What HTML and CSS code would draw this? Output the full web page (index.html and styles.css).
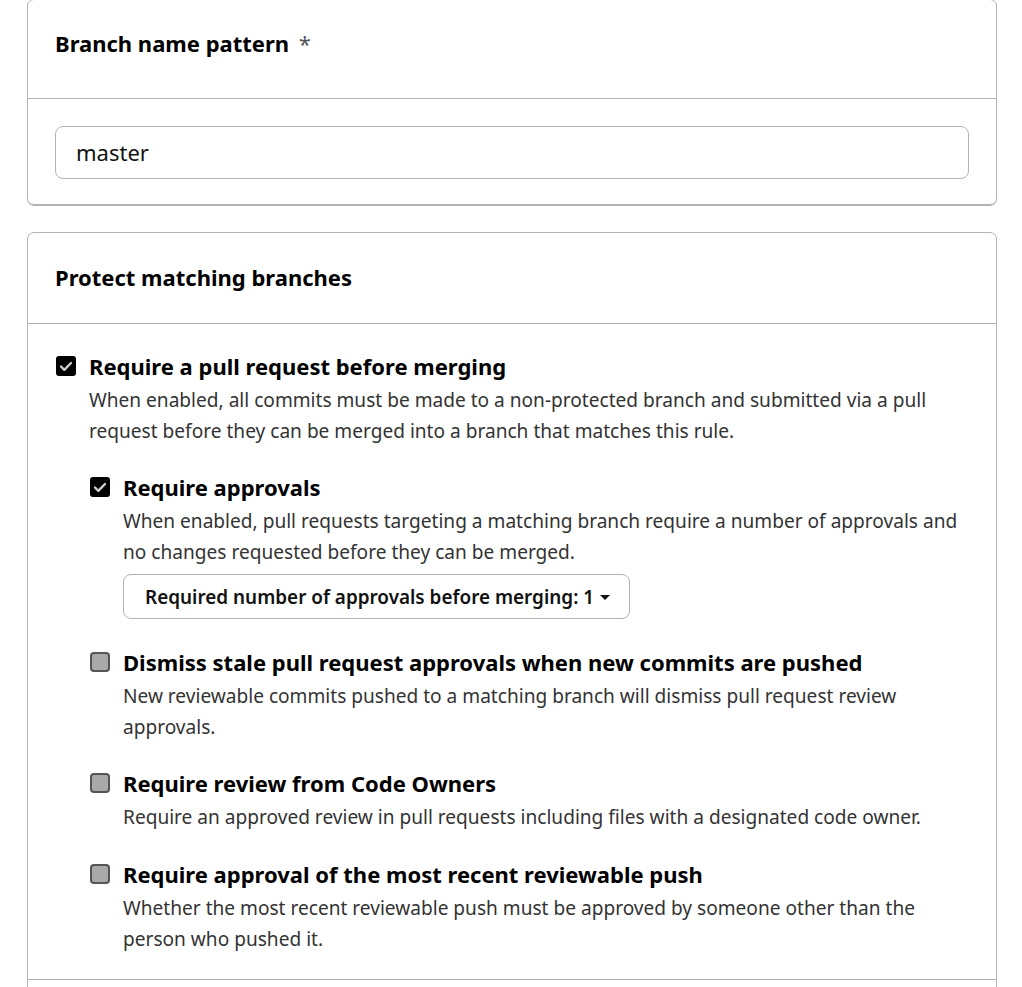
FILE: index.html
```html
<!DOCTYPE html>
<html lang="en">
<head>
<meta charset="utf-8">
<title>Branch protection rule</title>
<link rel="stylesheet" href="styles.css">
</head>
<body>
<div class="page">
  <section class="box box-first">
    <div class="box-header">
      <h2 class="box-title">Branch name pattern <span class="req">*</span></h2>
    </div>
    <div class="box-body">
      <div class="text-input">master</div>
    </div>
  </section>

  <section class="box box-second">
    <div class="box-header">
      <h2 class="box-title">Protect matching branches</h2>
    </div>
    <div class="box-body rules">
      <div class="rule">
        <span class="cb cb-checked"><svg viewBox="0 0 20 20" width="20" height="20"><path d="M5 10.5l3.3 3.3L15 7" fill="none" stroke="#cfcfcf" stroke-width="2.4" stroke-linecap="round" stroke-linejoin="round"/></svg></span>
        <div class="rule-text">
          <div class="rule-title">Require a pull request before merging</div>
          <div class="rule-desc">When enabled, all commits must be made to a non-protected branch and submitted via a pull request before they can be merged into a branch that matches this rule.</div>

          <div class="rule sub">
            <span class="cb cb-checked"><svg viewBox="0 0 20 20" width="20" height="20"><path d="M5 10.5l3.3 3.3L15 7" fill="none" stroke="#cfcfcf" stroke-width="2.4" stroke-linecap="round" stroke-linejoin="round"/></svg></span>
            <div class="rule-text">
              <div class="rule-title">Require approvals</div>
              <div class="rule-desc">When enabled, pull requests targeting a matching branch require a number of approvals and no changes requested before they can be merged.</div>
              <div class="select-btn">Required number of approvals before merging: 1 <span class="caret"></span></div>
            </div>
          </div>

          <div class="rule sub">
            <span class="cb"></span>
            <div class="rule-text">
              <div class="rule-title">Dismiss stale pull request approvals when new commits are pushed</div>
              <div class="rule-desc">New reviewable commits pushed to a matching branch will dismiss pull request review approvals.</div>
            </div>
          </div>

          <div class="rule sub">
            <span class="cb"></span>
            <div class="rule-text">
              <div class="rule-title">Require review from Code Owners</div>
              <div class="rule-desc">Require an approved review in pull requests including files with a designated code owner.</div>
            </div>
          </div>

          <div class="rule sub">
            <span class="cb"></span>
            <div class="rule-text">
              <div class="rule-title">Require approval of the most recent reviewable push</div>
              <div class="rule-desc">Whether the most recent reviewable push must be approved by someone other than the person who pushed it.</div>
            </div>
          </div>
        </div>
      </div>
    </div>
    <div class="box-row"></div>
  </section>
</div>
</body>
</html>
```

FILE: styles.css
```css
* { box-sizing: border-box; }
html, body {
  margin: 0;
  padding: 0;
  background: #ffffff;
}
body {
  font-family: "Noto Sans", "Open Sans", "DejaVu Sans", sans-serif;
  color: #111;
}
.page {
  padding: 0 25px 0 27px;
  display: flex;
  flex-direction: column;
  gap: 27px;
}
.box {
  border: 1px solid #b3b3b3;
  border-radius: 7px;
  box-shadow: 0 1px 0 #b3b3b3;
}
.box-first {
  margin-top: -1px;
}
.box-header {
  height: 99px;
  padding: 0 27px 12px 27px;
  display: flex;
  align-items: center;
  border-bottom: 1px solid #b3b3b3;
}
.box-second .box-header {
  height: 91px;
  padding-bottom: 2px;
}
.box-title {
  margin: 0;
  font-size: 22px;
  font-weight: 700;
  color: #000;
}
.req {
  font-weight: 400;
  color: #555;
  margin-left: 4px;
}
.box-body {
  padding: 27px 27px 25px 27px;
}
.text-input {
  height: 53px;
  border: 1px solid #b3b3b3;
  border-radius: 8px;
  padding: 0 20px 2px 20px;
  display: flex;
  align-items: center;
  font-size: 22px;
  color: #111;
}
.rules {
  padding: 26px 27px 24px 28px;
}
.rule {
  display: flex;
  gap: 13px;
  align-items: flex-start;
}
.rule.sub {
  margin-top: 24px;
  gap: 13px;
}
.rule.sub:last-child {
  margin-top: 25px;
}
.rule.sub .cb {
  margin-left: 1px;
}
.rule-text {
  flex: 1;
  min-width: 0;
}
.rule-title {
  font-size: 22px;
  line-height: 32px;
  font-weight: 700;
  color: #000;
}
.rule-desc {
  font-size: 19.1px;
  line-height: 31px;
  color: #333;
  padding-top: 3px;
}
.cb {
  flex: none;
  width: 20px;
  height: 20px;
  margin-top: 6px;
  border: 2px solid #555;
  border-radius: 4px;
  background: #a9a9a9;
  display: flex;
  align-items: center;
  justify-content: center;
}
.cb-checked {
  background: #000;
  border-color: #000;
  border-radius: 3px;
}
.cb svg {
  display: block;
  flex: none;
}
.select-btn {
  display: inline-flex;
  align-items: center;
  gap: 6px;
  margin-top: 6px;
  margin-bottom: 3px;
  height: 45px;
  padding: 0 19px 0 21px;
  border: 1px solid #b3b3b3;
  border-radius: 8px;
  font-size: 18.9px;
  font-weight: 600;
  color: #111;
}
.caret {
  width: 0;
  height: 0;
  border-left: 5px solid transparent;
  border-right: 5px solid transparent;
  border-top: 5px solid #111;
  margin-top: 2px;
}
.box-row {
  border-top: 1px solid #b3b3b3;
  height: 40px;
}
```
